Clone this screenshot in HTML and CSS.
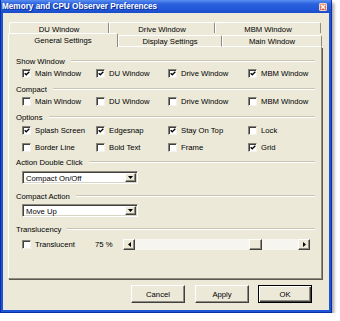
FILE: index.html
```html
<!DOCTYPE html>
<html>
<head>
<meta charset="utf-8">
<title>Memory and CPU Observer Preferences</title>
<link rel="stylesheet" href="styles.css">
</head>
<body>
<div class="window">
  <div class="titlebar">
    <span class="title">Memory and CPU Observer Preferences</span>
    <span class="close"><svg width="6" height="6" viewBox="0 0 6 6"><path d="M1 1L5 5M5 1L1 5" stroke="#fff" stroke-width="1.3"/></svg></span>
  </div>
  <div class="client">
    <div class="tabrow back">
      <div class="tab w100">DU Window</div>
      <div class="tab w106">Drive Window</div>
      <div class="tab w106">MBM Window</div>
    </div>
    <div class="tabrow front">
      <div class="tab sel">General Settings</div>
      <div class="tab w104">Display Settings</div>
      <div class="tab w100">Main Window</div>
    </div>
    <div class="panel">
      <div class="group g1"><span>Show Window</span><i class="line"></i></div>
      <div class="cbrow">
        <label class="cb"><span class="box"><svg width="7" height="7" viewBox="0 0 7 7"><path d="M0.8 3.2L2.6 5L6.2 1.4" stroke="#000" stroke-width="1.5" fill="none"/></svg></span>Main Window</label>
        <label class="cb"><span class="box"><svg width="7" height="7" viewBox="0 0 7 7"><path d="M0.8 3.2L2.6 5L6.2 1.4" stroke="#000" stroke-width="1.5" fill="none"/></svg></span>DU Window</label>
        <label class="cb"><span class="box"><svg width="7" height="7" viewBox="0 0 7 7"><path d="M0.8 3.2L2.6 5L6.2 1.4" stroke="#000" stroke-width="1.5" fill="none"/></svg></span>Drive Window</label>
        <label class="cb"><span class="box"><svg width="7" height="7" viewBox="0 0 7 7"><path d="M0.8 3.2L2.6 5L6.2 1.4" stroke="#000" stroke-width="1.5" fill="none"/></svg></span>MBM Window</label>
      </div>
      <div class="group g2"><span>Compact</span><i class="line"></i></div>
      <div class="cbrow">
        <label class="cb"><span class="box"></span>Main Window</label>
        <label class="cb"><span class="box"></span>DU Window</label>
        <label class="cb"><span class="box"></span>Drive Window</label>
        <label class="cb"><span class="box"></span>MBM Window</label>
      </div>
      <div class="group g3"><span>Options</span><i class="line"></i></div>
      <div class="cbrow r3">
        <label class="cb"><span class="box"><svg width="7" height="7" viewBox="0 0 7 7"><path d="M0.8 3.2L2.6 5L6.2 1.4" stroke="#000" stroke-width="1.5" fill="none"/></svg></span>Splash Screen</label>
        <label class="cb"><span class="box"><svg width="7" height="7" viewBox="0 0 7 7"><path d="M0.8 3.2L2.6 5L6.2 1.4" stroke="#000" stroke-width="1.5" fill="none"/></svg></span>Edgesnap</label>
        <label class="cb"><span class="box"><svg width="7" height="7" viewBox="0 0 7 7"><path d="M0.8 3.2L2.6 5L6.2 1.4" stroke="#000" stroke-width="1.5" fill="none"/></svg></span>Stay On Top</label>
        <label class="cb"><span class="box"></span>Lock</label>
      </div>
      <div class="cbrow r4">
        <label class="cb"><span class="box"></span>Border Line</label>
        <label class="cb"><span class="box"></span>Bold Text</label>
        <label class="cb"><span class="box"></span>Frame</label>
        <label class="cb"><span class="box"><svg width="7" height="7" viewBox="0 0 7 7"><path d="M0.8 3.2L2.6 5L6.2 1.4" stroke="#000" stroke-width="1.5" fill="none"/></svg></span>Grid</label>
      </div>
      <div class="group g4"><span>Action Double Click</span><i class="line"></i></div>
      <div class="select s1"><span class="val">Compact On/Off</span><span class="arrow"><svg width="5" height="3" viewBox="0 0 5 3"><path d="M0 0H5L2.5 3Z" fill="#000"/></svg></span></div>
      <div class="group g5"><span>Compact Action</span><i class="line"></i></div>
      <div class="select s2"><span class="val">Move Up</span><span class="arrow"><svg width="5" height="3" viewBox="0 0 5 3"><path d="M0 0H5L2.5 3Z" fill="#000"/></svg></span></div>
      <div class="group g6"><span>Translucency</span><i class="line"></i></div>
      <div class="trow">
        <label class="cb tcb"><span class="box"></span>Translucent</label>
        <span class="pct">75 %</span>
        <div class="scroll">
          <span class="sbtn"><svg width="3" height="5" viewBox="0 0 3 5"><path d="M3 0V5L0 2.5Z" fill="#000"/></svg></span>
          <span class="track"><span class="thumb"></span></span>
          <span class="sbtn"><svg width="3" height="5" viewBox="0 0 3 5"><path d="M0 0V5L3 2.5Z" fill="#000"/></svg></span>
        </div>
      </div>
    </div>
    <div class="buttons">
      <button class="btn">Cancel</button>
      <button class="btn apply">Apply</button>
      <button class="btn ok">OK</button>
    </div>
  </div>
</div>
</body>
</html>
```
FILE: styles.css
```css
* { box-sizing: border-box; }
body {
  margin: 0;
  background: #fff;
  font-family: "Liberation Sans", Arial, sans-serif;
  font-size: 7.7px;
  color: #000;
}
.window {
  width: 332px;
  height: 313px;
  background: #1f53d6;
  border: 1px solid #0c2fa6;
  border-top: none;
  display: flex;
  flex-direction: column;
  box-shadow: 2px 3px 3px rgba(70, 70, 70, 0.5);
}
.titlebar {
  height: 13px;
  flex: none;
  display: flex;
  align-items: center;
  padding: 0 4px 0 1px;
  background: linear-gradient(#5a8ff0, #2c62de 30%, #2158d8 70%, #1b4cc8);
  color: #fff;
  font-weight: bold;
  font-size: 8.2px;
}
.title {
  flex: 1;
  white-space: nowrap;
  text-shadow: 1px 1px 0 #0d2f95;
}
.close {
  width: 8px;
  height: 8px;
  display: flex;
  align-items: center;
  justify-content: center;
  background: linear-gradient(#ee9878, #d85a36);
  border: 1px solid #f6d0c0;
  border-radius: 1px;
}
.client {
  flex: 1;
  margin: 0 2px 2px 2px;
  background: #ece9d8;
  padding: 9px 0 0 5px;
}
.tabrow { display: flex; }
.back { height: 11px; margin-left: 1px; }
.front { height: 14px; align-items: flex-end; }
.tab {
  border-top: 1px solid #fff;
  border-left: 1px solid #fff;
  border-right: 1px solid #8e8c80;
  border-radius: 2px 2px 0 0;
  text-align: center;
  white-space: nowrap;
}
.back .tab { height: 11px; line-height: 13px; }
.front .tab { height: 12px; line-height: 11px; border-bottom: 1px solid #fff; }
.front .tab.sel { width: 110px; height: 14px; line-height: 13px; border-bottom: none; }
.w100 { width: 100px; }
.w104 { width: 104px; }
.w106 { width: 106px; }
.panel {
  width: 314px;
  height: 232px;
  border-left: 1px solid #fff;
  border-right: 1px solid #8e8c80;
  border-bottom: 1px solid #8e8c80;
  box-shadow: 1px 1px 0 #5c5a50;
  padding: 8px 6px 0 7px;
}
.group {
  display: flex;
  align-items: center;
  height: 12px;
  white-space: nowrap;
}
.line {
  flex: 1;
  margin-left: 6px;
  height: 2px;
  border-top: 1px solid #c8c5b4;
  border-bottom: 1px solid #fff;
}
.g2, .g3 { margin-top: 4px; }
.g4 { margin-top: 3px; }
.g5 { margin-top: 6px; }
.g6 { margin-top: 6px; }
.cbrow {
  display: grid;
  grid-template-columns: 74px 72px 80px 1fr;
  height: 12px;
  margin-left: 6px;
  align-items: center;
}
.r3 { margin-top: 1px; }
.r4 { margin-top: 5px; }
.cb {
  display: flex;
  align-items: center;
  white-space: nowrap;
}
.box {
  width: 9px;
  height: 9px;
  margin-right: 4px;
  background: #fff;
  border-top: 1px solid #85837a;
  border-left: 1px solid #85837a;
  border-right: 1px solid #f4f2ea;
  border-bottom: 1px solid #f4f2ea;
  box-shadow: inset 1px 1px 0 #3e3e3a;
  display: flex;
  align-items: center;
  justify-content: center;
  padding: 1px 0 0 1px;
}
.select {
  display: flex;
  width: 116px;
  height: 13px;
  margin: 3px 0 0 6px;
  background: #fff;
  border: 1px solid;
  border-color: #8a887c #fff #fff #8a887c;
  box-shadow: inset 1px 1px 0 #404040, inset -1px -1px 0 #d8d4c4;
  padding: 1px;
}
.s2 { margin-top: 2px; }
.val { flex: 1; line-height: 11px; padding-left: 2px; }
.arrow {
  width: 11px;
  display: flex;
  align-items: center;
  justify-content: center;
  background: #ece9d8;
  border: 1px solid;
  border-color: #fff #404040 #404040 #fff;
  box-shadow: inset -1px -1px 0 #8e8c80;
}
.trow {
  display: flex;
  align-items: center;
  height: 12px;
  margin: 3px 0 0 6px;
}
.tcb { width: 73px; }
.pct { width: 28px; }
.scroll {
  width: 187px;
  height: 11px;
  display: flex;
}
.sbtn, .thumb {
  background: #ece9d8;
  border: 1px solid;
  border-color: #fff #404040 #404040 #fff;
  box-shadow: inset -1px -1px 0 #8e8c80;
}
.sbtn {
  width: 12px;
  display: flex;
  align-items: center;
  justify-content: center;
}
.track {
  flex: 1;
  background: #f6f5ef;
  display: flex;
  padding-left: 114px;
}
.thumb { width: 13px; }
.buttons {
  display: flex;
  justify-content: flex-end;
  margin-top: 6px;
  padding-right: 17px;
  gap: 10px;
}
.btn {
  width: 54px;
  height: 18px;
  font-family: "Liberation Sans", Arial, sans-serif;
  font-size: 7.7px;
  color: #000;
  background: #ece9d8;
  border: 1px solid;
  border-color: #fff #404040 #404040 #fff;
  box-shadow: inset -1px -1px 0 #8e8c80;
  padding: 0;
}
.ok {
  margin-left: -1px;
  border: 1px solid #000;
  box-shadow: inset 1px 1px 0 #fff, inset -1px -1px 0 #404040, inset -2px -2px 0 #8e8c80;
}
```
